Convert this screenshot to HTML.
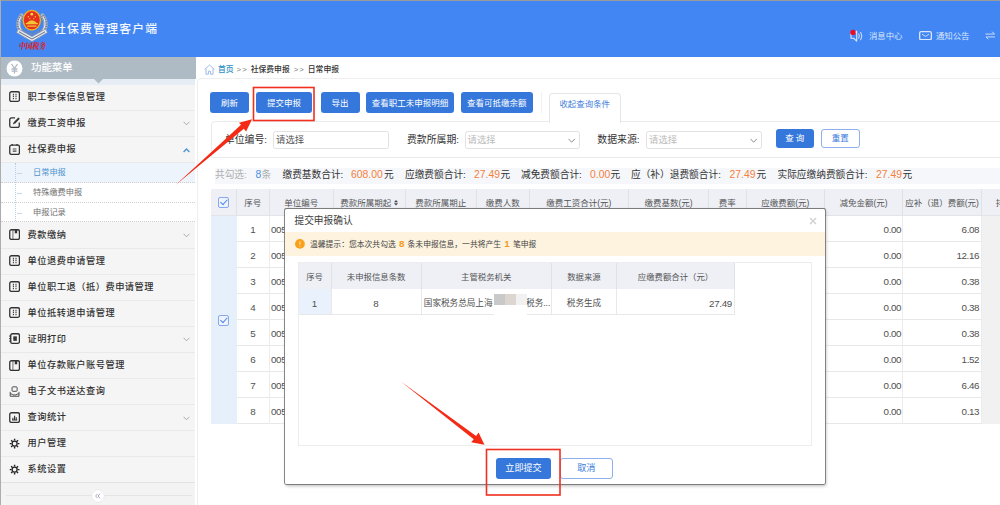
<!DOCTYPE html>
<html lang="zh-CN">
<head>
<meta charset="utf-8">
<title>社保费管理客户端</title>
<style>
*{box-sizing:border-box;margin:0;padding:0}
html,body{width:1000px;height:505px;overflow:hidden;background:#fff}
body{position:relative;font-family:"Liberation Sans","Noto Sans CJK SC",sans-serif;color:#333;font-size:9px;line-height:1}
.abs{position:absolute}
#topline{left:0;top:0;width:1000px;height:1px;background:#9a9a9a}
#header{left:0;top:1px;width:1000px;height:56px;background:#4286f4}
#leftline{left:0;top:0;width:1.200px;height:505px;background:#adadad;z-index:5}
#title{font-weight:500;left:54px;top:20px;font-size:11.8px;letter-spacing:1.25px;color:#f4f8ff;line-height:16px;white-space:nowrap}
.hdtxt{color:#d9e6fd;font-size:8.400px;line-height:12px;top:29.200px;white-space:nowrap}
/* sidebar */
#side{left:0;top:57px;width:195px;height:448px;background:#f5f5f5}
#sidehd{z-index:2;left:0;top:0;width:195.700px;height:22px;background:#aebbc5}
#sidehd .t{left:31px;top:4px;font-size:10.4px;line-height:14px;color:#fff;white-space:nowrap;text-shadow:0 0 1px rgba(255,255,255,.6)}
#strip{left:0;top:22px;width:195px;height:5.5px;background:#e6edf5}
.mi{left:0;width:195px;height:26.100px;border-bottom:1px solid #e9e9e9;font-size:9.2px;letter-spacing:.550px;color:#303030;line-height:25.600px;padding-left:27.500px;white-space:nowrap;font-weight:500}
.mi svg.ic{position:absolute;left:8.600px;top:6.600px;width:11.200px;height:11.200px}
.mi svg.ch{position:absolute;left:182.5px;top:10.5px;width:7px;height:5px}
.sub{left:1px;width:194px;height:19.8px;background:#fff;border-bottom:1px dotted #cfcfcf;font-size:8.200px;color:#707070;line-height:20.500px;padding-left:32px;white-space:nowrap}
.sub.on{background:#eef4fb;color:#4b93cf}
.sub i{position:absolute;left:16px;top:10px;width:4.5px;height:1px;background:#c9d6e6}

/* main */
#crumb{left:204px;top:64.300px;height:12px;line-height:12px;font-size:7.800px;color:#333;white-space:nowrap;font-weight:500}
#crumbline{left:197px;top:77.500px;width:810px;height:440px;border:1px solid #eee;border-radius:4px 0 0 0}
.btn{top:92.400px;height:21px;border-radius:3px;background:#3577da;color:#fff;font-size:8.500px;line-height:22.500px;text-align:center;white-space:nowrap}
#tab{left:549px;top:92.500px;width:71.500px;height:30px;border:1px solid #e6e6e6;border-bottom:none;border-radius:4px 4px 0 0;background:#fff;color:#3f7fdc;font-size:8.450px;line-height:21px;text-align:center;z-index:2}
#qpanel{left:210.500px;top:121px;width:800px;height:37px;border:1px solid #ebebeb;border-radius:4px 0 0 0}
.lbl{top:133.200px;font-size:9.900px;line-height:13px;color:#333;white-space:nowrap;text-align:right}
.inp{top:131.200px;height:17.400px;border:1px solid #e2e2e2;border-radius:2.500px;background:#fff;font-size:9.400px;line-height:16.400px;color:#bbb;padding-left:2px;white-space:nowrap}
.inp svg{position:absolute;right:3.200px;top:5.800px;width:7.400px;height:5.300px}
#sum{left:210.500px;top:167.500px;width:790px;height:16px;background:linear-gradient(90deg,#fff 4px,#f5f7fa 4px);font-size:9.700px;line-height:14.500px;color:#333;white-space:nowrap}
#sum span{position:absolute;top:0}
#sum .o{color:#f5803a;font-size:10.400px}
#sum .g{color:#b0b0b0}
/* table */
#thead{left:210.500px;top:189px;width:790px;height:26.500px;background:#eef0f5;border-bottom:1px solid #e2e4ea}
.th{top:0;height:26px;line-height:29px;font-size:8.500px;color:#555;text-align:center;border-right:1px solid #dfe1e6;white-space:nowrap;overflow:hidden}
#chkcol{left:210.500px;top:215.500px;width:26.500px;height:208px;background:#e6f0fb}
.tr{left:237px;width:763px;height:26.100px;border-bottom:1px solid #e8e8e8;font-size:9.800px;letter-spacing:-.350px;line-height:28px;color:#505050}
.td{top:0;height:26px;border-right:1px solid #ececec;white-space:nowrap;overflow:hidden}
.cb{width:11.200px;height:11.200px;border:1px solid #86a9ee;border-radius:2px;background:#eef3fd}
.cb:after{content:"";position:absolute;left:2.800px;top:.600px;width:3.300px;height:5.600px;border:solid #4f86ea;border-width:0 1.300px 1.300px 0;transform:rotate(42deg)}

/* dialog */
#dlg{left:284.800px;top:208.800px;width:540.200px;height:275.700px;background:#fff;border-radius:1.500px;box-shadow:0 0 0 .900px rgba(120,120,120,.9),0 -.300px .500px .600px rgba(90,90,90,.5),1px 1.500px 3.500px rgba(0,0,0,.28);z-index:10}
#dlg .ttl{left:10.500px;top:6.300px;font-size:9.700px;line-height:14px;color:#3c3c3c;white-space:nowrap}
#dlg .x{left:524px;top:5px;font-size:13px;line-height:14px;color:#cfcfcf;font-weight:400}
#warn{left:.800px;top:24px;width:540.200px;height:24px;background:#fdf3df;font-size:7.800px;line-height:23.500px;color:#444;white-space:nowrap;padding-left:25.200px}
#warn b{color:#f59a23;font-size:9.800px;font-weight:700;margin:0 1px}
#grid{left:13.500px;top:54.100px;width:514.500px;height:183.500px;border:1px solid #ededed}
.gh{top:0;height:26px;background:#eef0f5;border-right:1px solid #e0e2e8;font-size:8.400px;line-height:28px;color:#555;text-align:center;white-space:nowrap}
.gd{top:26px;height:25.800px;border-right:1px solid #e8e8e8;border-bottom:1px solid #e8e8e8;font-size:8.600px;line-height:29px;color:#505050;text-align:center;white-space:nowrap;overflow:hidden}
.dbtn{top:250px;height:20.500px;border-radius:3px;font-size:9.100px;line-height:20px;text-align:center;white-space:nowrap}
</style>
</head>
<body>
<div class="abs" id="topline"></div>
<div class="abs" id="header">
  <svg class="abs" style="left:15px;top:6px" width="34" height="36" viewBox="0 0 34 36">
    <g fill="none" stroke-linecap="round">
      <path d="M6.500 8.500C1.500 15 2.500 24 10 28.500" stroke="#aeb7c4" stroke-width="4.200"/><path d="M27.500 8.500C32.500 15 31.500 24 24 28.500" stroke="#aeb7c4" stroke-width="4.200"/>
      <path d="M6.500 8.500C1.500 15 2.500 24 10 28.500" stroke="#6d7a92" stroke-width="3.600" stroke-dasharray=".9 1.300" stroke-linecap="butt"/><path d="M27.500 8.500C32.500 15 31.500 24 24 28.500" stroke="#6d7a92" stroke-width="3.600" stroke-dasharray=".9 1.300" stroke-linecap="butt"/>
      <path d="M5.800 10C2.500 15.500 3.500 22.500 9.500 26.500" stroke="#eef1f5" stroke-width="1"/><path d="M28.200 10C31.500 15.500 30.500 22.500 24.500 26.500" stroke="#eef1f5" stroke-width="1"/>
    </g>
    <path d="M1.500 25.500L17 34.500L32.500 25.500L30.500 22L17 29.500L3.500 22Z" fill="#e4e8ee" stroke="#7f8ba0" stroke-width=".7"/>
    <path d="M4 24.800L17 32L30 24.800" fill="none" stroke="#55637c" stroke-width=".9"/>
    <path d="M7 22.500L17 27.500L27 22.500" fill="none" stroke="#7d899d" stroke-width="1.600" stroke-dasharray="1.200 .8"/>
    <ellipse cx="16.800" cy="13.200" rx="9.300" ry="10.500" fill="#efb125"/>
    <ellipse cx="16.800" cy="13.200" rx="7.900" ry="9.100" fill="#e5301d"/>
    <path d="M10.700 16h12.200v1.300h-12.200zM12.200 18.500h9.200v1.200h-9.200z" fill="#f3c536"/>
    <path d="M11.700 16q5.100-5.600 10.200 0z" fill="#f3c536"/>
    <circle cx="16.800" cy="7.200" r="1.400" fill="#f7d548"/><circle cx="13.300" cy="9.700" r=".7" fill="#f7d548"/><circle cx="20.300" cy="9.700" r=".7" fill="#f7d548"/><circle cx="14.800" cy="11.600" r=".6" fill="#f7d548"/><circle cx="18.800" cy="11.600" r=".6" fill="#f7d548"/>
  </svg>
  <div class="abs" style="left:19px;top:39.500px;font-family:'Liberation Serif','Noto Serif CJK SC',serif;font-weight:900;font-size:6.800px;line-height:10px;color:#d8232a;letter-spacing:-.100px;white-space:nowrap;transform:skewX(-10deg) scaleY(1.250)">中国税务</div>
  <div class="abs" id="title">社保费管理客户端</div>
  <svg class="abs" style="left:849px;top:28px" width="16" height="14" viewBox="0 0 16 14">
    <path d="M2 5h2.400l3.300-2.900v10l-3.300-2.900H2z" fill="none" stroke="#dbe7fd" stroke-width="1.100" stroke-linejoin="round"/>
    <path d="M9.600 4.600q1.500 2.500 0 5M11.600 3q2.500 4.100 0 8.200" fill="none" stroke="#dbe7fd" stroke-width="1"/>
    <circle cx="4" cy="3.400" r="2.600" fill="#f5081a"/>
  </svg>
  <div class="abs hdtxt" style="left:869px">消息中心</div>
  <svg class="abs" style="left:919px;top:29.700px" width="13" height="9.400" viewBox="0 0 13 9.400">
    <rect x=".65" y=".65" width="11.700" height="8.100" rx="1.400" fill="none" stroke="#dbe7fd" stroke-width="1.300"/>
    <path d="M3 3.200l3.500 2.200l3.500-2.200" fill="none" stroke="#dbe7fd" stroke-width=".9"/>
  </svg>
  <div class="abs hdtxt" style="left:936px">通知公告</div>
  <svg class="abs" style="left:985px;top:30.300px" width="10.500" height="9" viewBox="0 0 11 9">
    <path d="M.5 3 h9.500 l-2.500 -2.500 M10.500 6 h-9.500 l2.500 2.500" fill="none" stroke="#d3e1fc" stroke-width="1"/>
  </svg>
</div>
<div class="abs" id="leftline"></div>
<div class="abs" id="side">
  <div class="abs" id="sidehd">
    <svg class="abs" style="left:5.500px;top:2.500px" width="17" height="17" viewBox="0 0 17 17"><circle cx="8.500" cy="8.500" r="8" fill="#fff"/><path d="M5.500 4 L8.500 8.300 L11.500 4 M8.500 8.300 V13.500 M5.500 9 h6 M5.500 11.200 h6" fill="none" stroke="#aebbc5" stroke-width="1.300"/></svg>
    <div class="abs t">功能菜单</div>
    <svg class="abs" style="left:93.500px;top:21.500px" width="9" height="5" viewBox="0 0 9 5"><path d="M0 0 h9 L4.500 4.500z" fill="#aebbc5"/></svg>
  </div>
  <div class="abs" id="strip"></div>
  <div class="abs mi" style="top:27.800px"><svg class="ic" viewBox="0 0 12 12"><rect x=".8" y=".8" width="10.400" height="10.400" rx="1.800" fill="none" stroke="#333" stroke-width="1.400"/><path d="M4.700 3v6M7.500 3v6" stroke="#333" stroke-width="1.100" stroke-dasharray="1.500 .700" fill="none"/></svg>职工参保信息管理</div>
  <div class="abs mi" style="top:53.900px"><svg class="ic" viewBox="0 0 12 12"><path d="M6.500 1H2.600a1.800 1.800 0 0 0-1.800 1.800v6.600a1.800 1.800 0 0 0 1.800 1.800h6.600a1.800 1.800 0 0 0 1.800-1.800V5.800" fill="none" stroke="#333" stroke-width="1.400"/><path d="M5.600 6.600L10.800 1.200" stroke="#333" stroke-width="2.200" fill="none"/><path d="M4.300 7.900l.5-2 1.600 1.500z" fill="#333"/></svg>缴费工资申报<svg class="ch" viewBox="0 0 7 5"><path d="M.6 .8L3.500 3.800L6.400 .8" fill="none" stroke="#aaa" stroke-width="1"/></svg></div>
  <div class="abs mi" style="top:80px"><svg class="ic" viewBox="0 0 12 12"><rect x=".8" y="1.300" width="10.400" height="9.900" rx="1.800" fill="none" stroke="#333" stroke-width="1.400"/><path d="M3.400 0v1.600M8.600 0v1.600" stroke="#333" stroke-width="1.400"/><path d="M4 5.200h4M4 6.600h4M4 8h4" stroke="#555" stroke-width=".9"/></svg>社保费申报<svg class="ch" viewBox="0 0 7 5"><path d="M.6 4L3.500 1L6.400 4" fill="none" stroke="#4b93cf" stroke-width="1.300"/></svg></div>
  <div class="abs sub on" style="top:106.300px"><i></i>日常申报</div>
  <div class="abs sub" style="top:126px"><i></i>特殊缴费申报</div>
  <div class="abs sub" style="top:145.700px"><i></i>申报记录</div>
  <div class="abs" style="left:14.500px;top:106px;width:0;height:58px;border-left:1px dotted #b9cfe8"></div>
  <div class="abs mi" style="top:165.500px"><svg class="ic" viewBox="0 0 12 12"><rect x=".8" y=".8" width="10.400" height="10.400" rx="1.800" fill="none" stroke="#333" stroke-width="1.400"/><path d="M4.200 1v10" stroke="#444" stroke-width=".8"/><rect x="6.200" y="1" width="2.600" height="3.600" fill="#333"/></svg>费款缴纳<svg class="ch" viewBox="0 0 7 5"><path d="M.6 .8L3.500 3.800L6.400 .8" fill="none" stroke="#aaa" stroke-width="1"/></svg></div>
  <div class="abs mi" style="top:191.600px"><svg class="ic" viewBox="0 0 12 12"><rect x=".8" y=".8" width="10.400" height="10.400" rx="1.800" fill="none" stroke="#333" stroke-width="1.400"/><path d="M4.700 3v6M7.500 3v6" stroke="#333" stroke-width="1.100" stroke-dasharray="1.500 .700" fill="none"/></svg>单位退费申请管理</div>
  <div class="abs mi" style="top:217.700px"><svg class="ic" viewBox="0 0 12 12"><rect x=".8" y=".8" width="10.400" height="10.400" rx="1.800" fill="none" stroke="#333" stroke-width="1.400"/><path d="M4.700 3v6M7.500 3v6" stroke="#333" stroke-width="1.100" stroke-dasharray="1.500 .700" fill="none"/></svg>单位职工退（抵）费申请管理</div>
  <div class="abs mi" style="top:243.800px"><svg class="ic" viewBox="0 0 12 12"><rect x=".8" y=".8" width="10.400" height="10.400" rx="1.800" fill="none" stroke="#333" stroke-width="1.400"/><path d="M4.700 3v6M7.500 3v6" stroke="#333" stroke-width="1.100" stroke-dasharray="1.500 .700" fill="none"/></svg>单位抵转退申请管理</div>
  <div class="abs mi" style="top:269.900px"><svg class="ic" viewBox="0 0 12 12"><rect x="1.800" y=".8" width="9.400" height="10.400" rx="1.800" fill="none" stroke="#333" stroke-width="1.400"/><path d="M0 3.300h2.400M0 6h2.400M0 8.700h2.400" stroke="#333" stroke-width="1"/><rect x="4.600" y="3.600" width="3.800" height="4.800" fill="#333"/></svg>证明打印<svg class="ch" viewBox="0 0 7 5"><path d="M.6 .8L3.500 3.800L6.400 .8" fill="none" stroke="#aaa" stroke-width="1"/></svg></div>
  <div class="abs mi" style="top:296.000px"><svg class="ic" viewBox="0 0 12 12"><rect x=".8" y=".8" width="10.400" height="10.400" rx="1.800" fill="none" stroke="#333" stroke-width="1.400"/><path d="M4.200 1v10" stroke="#444" stroke-width=".8"/><rect x="6.200" y="1" width="2.600" height="3.600" fill="#333"/></svg>单位存款账户账号管理</div>
  <div class="abs mi" style="top:322.100px"><svg class="ic" viewBox="0 0 12 12"><rect x="3.300" y=".9" width="5.400" height="4.800" rx=".8" fill="none" stroke="#444" stroke-width="1"/><path d="M1.300 6.300V11h9.400V6.300M1.300 8.600h2.200l.8 1h3.400l.8-1h2.200" fill="none" stroke="#444" stroke-width="1"/></svg>电子文书送达查询</div>
  <div class="abs mi" style="top:348.200px"><svg class="ic" viewBox="0 0 12 12"><rect x=".8" y=".8" width="10.400" height="10.400" rx="1.800" fill="none" stroke="#333" stroke-width="1.400"/><path d="M3.300 8.600h5.600" stroke="#333" stroke-width="1"/><path d="M4.200 8.500V6.300M6 8.500V4M7.800 8.500V5.600" stroke="#333" stroke-width="1.200"/></svg>查询统计<svg class="ch" viewBox="0 0 7 5"><path d="M.6 .8L3.500 3.800L6.400 .8" fill="none" stroke="#aaa" stroke-width="1"/></svg></div>
  <div class="abs mi" style="top:374.300px"><svg class="ic" viewBox="-.700 -.700 13.400 13.400"><circle cx="6" cy="6" r="3" fill="none" stroke="#222" stroke-width="1.500"/><g stroke="#222" stroke-width="1.700"><path d="M6 .2v2.200M6 9.600v2.200M.2 6h2.200M9.600 6h2.200M1.900 1.900l1.500 1.500M8.600 8.600l1.500 1.500M10.100 1.900L8.600 3.400M3.400 8.600L1.900 10.100"/></g></svg>用户管理</div>
  <div class="abs mi" style="top:400.400px"><svg class="ic" viewBox="-.700 -.700 13.400 13.400"><circle cx="6" cy="6" r="3" fill="none" stroke="#222" stroke-width="1.500"/><g stroke="#222" stroke-width="1.700"><path d="M6 .2v2.200M6 9.600v2.200M.2 6h2.200M9.600 6h2.200M1.900 1.900l1.500 1.500M8.600 8.600l1.500 1.500M10.100 1.900L8.600 3.400M3.400 8.600L1.900 10.100"/></g></svg>系统设置</div>
  <div class="abs" style="left:0;top:425px;width:195px;height:23px;background:#f3f3f3;border-top:1px solid #e2e2e2"></div>
  <div class="abs" style="left:6px;top:437.500px;width:186px;height:1px;background:#e4e4e4"></div>
  <svg class="abs" style="left:91px;top:431.500px" width="14" height="14" viewBox="0 0 14 14"><circle cx="7" cy="7" r="6.300" fill="#fff" stroke="#e6e6ee" stroke-width=".8"/><path d="M6.600 4.800L4.600 7L6.600 9.200M9 4.800L7 7L9 9.200" fill="none" stroke="#a9a9c8" stroke-width="1"/></svg>
</div>
<div class="abs" id="crumb"><svg style="position:absolute;left:-.500px;top:-.300px" width="11" height="11" viewBox="0 0 10 10"><path d="M.6 5L5 .9L9.400 5M1.800 4.200V9.300h2.200V6.600h2V9.300h2.200V4.200" fill="none" stroke="#9db9e8" stroke-width=".9"/></svg><span style="margin-left:14px;color:#2f8fc4">首页</span><span style="color:#777;letter-spacing:1px;margin:0 3px 0 3px">&gt;&gt;</span>社保费申报<span style="color:#777;letter-spacing:1px;margin:0 3px 0 4px">&gt;&gt;</span>日常申报</div>
<div class="abs" id="crumbline"></div>
<div class="abs btn" style="left:210px;width:39px">刷新</div>
<div class="abs btn" style="left:256px;width:56px">提交申报</div>
<div class="abs btn" style="left:320.5px;width:39px">导出</div>
<div class="abs btn" style="left:366px;width:88px">查看职工未申报明细</div>
<div class="abs btn" style="left:461px;width:71.5px">查看可抵缴余额</div>
<div class="abs" style="left:540.500px;top:92px;width:1px;height:21px;background:#f0f0f0"></div>
<div class="abs" id="tab">收起查询条件</div>
<div class="abs" id="qpanel"></div>
<div class="abs lbl" style="left:217px;width:50px">单位编号:</div>
<div class="abs inp" style="left:273px;width:115.500px;color:#555">请选择</div>
<div class="abs lbl" style="left:399px;width:60px">费款所属期:</div>
<div class="abs inp" style="left:464.500px;width:115.500px">请选择<svg viewBox="0 0 7 5"><path d="M.5 .8L3.500 4L6.500 .8" fill="none" stroke="#8a8a8a" stroke-width=".9"/></svg></div>
<div class="abs lbl" style="left:589px;width:50.500px">数据来源:</div>
<div class="abs inp" style="left:646px;width:115.500px">请选择<svg viewBox="0 0 7 5"><path d="M.5 .8L3.500 4L6.500 .8" fill="none" stroke="#8a8a8a" stroke-width=".9"/></svg></div>
<div class="abs" style="left:775.500px;top:129px;width:38.500px;height:19px;border-radius:3px;background:#3577da;color:#fff;font-size:8.500px;line-height:19px;text-align:center;letter-spacing:2px;padding-left:2px">查询</div>
<div class="abs" style="left:821px;top:129px;width:38.500px;height:19px;border-radius:3px;border:1px solid #8db0ec;background:#fff;color:#3a7cdc;font-size:8.500px;line-height:17px;text-align:center">重置</div>
<div class="abs" id="sum"><span class="g" style="left:4.500px">共勾选:</span><span style="left:45px;color:#4a8ee0;font-size:10.400px">8</span><span class="g" style="left:51px">条</span><span style="left:72px">缴费基数合计:</span><span class="o" style="left:140.500px">608.00</span><span style="left:173.500px">元</span><span style="left:194.500px">应缴费额合计:</span><span class="o" style="left:263.500px">27.49</span><span style="left:290px">元</span><span style="left:310.500px">减免费额合计:</span><span class="o" style="left:379.500px">0.00</span><span style="left:400px">元</span><span style="left:420.500px">应（补）退费额合计:</span><span class="o" style="left:519px">27.49</span><span style="left:546px">元</span><span style="left:567px">实际应缴纳费额合计:</span><span class="o" style="left:665.500px">27.49</span><span style="left:692px">元</span></div>
<div class="abs" id="thead">
<div class="abs th" style="left:0.0px;width:26.5px"><div class="cb" style="position:absolute;left:7.500px;top:7.500px"></div></div>
<div class="abs th" style="left:26.5px;width:32.5px">序号</div>
<div class="abs th" style="left:59.0px;width:64.5px">单位编号</div>
<div class="abs th" style="left:123.5px;width:71.5px">费款所属期起<svg style="display:inline-block;vertical-align:middle;margin:-1.500px 0 0 3px" width="4" height="5.600" viewBox="0 0 46 64"><path d="M23 0L46 26H0zM23 64L0 38H46z" fill="#444"/></svg></div>
<div class="abs th" style="left:195.0px;width:71.5px">费款所属期止</div>
<div class="abs th" style="left:266.5px;width:52.5px">缴费人数</div>
<div class="abs th" style="left:319.0px;width:99.5px">缴费工资合计(元)</div>
<div class="abs th" style="left:418.5px;width:80px">缴费基数(元)</div>
<div class="abs th" style="left:498.5px;width:37.5px">费率</div>
<div class="abs th" style="left:536.0px;width:78.5px">应缴费额(元)</div>
<div class="abs th" style="left:614.5px;width:78px">减免金额(元)</div>
<div class="abs th" style="left:692.5px;width:79px">应补（退）费额(元)</div>
<div class="abs th" style="left:771.5px;width:28px"><span style="margin-left:9px">排</span></div>
</div>
<div class="abs" id="chkcol"><div class="cb" style="position:absolute;left:7.500px;top:99px"></div></div>
<div class="abs tr" style="top:215.50px"><div class="abs td" style="left:0;width:32.500px;text-align:center">1</div><div class="abs td" style="left:32.500px;width:64.500px;padding-left:1.500px">005</div><div class="abs td" style="left:588px;width:78px;text-align:right;padding-right:.800px">0.00</div><div class="abs td" style="left:666px;width:79px;text-align:right;padding-right:1.800px">6.08</div><div class="abs td" style="left:745px;width:30px;background:#f1f1f1;border:none"></div></div>
<div class="abs tr" style="top:241.57px"><div class="abs td" style="left:0;width:32.500px;text-align:center">2</div><div class="abs td" style="left:32.500px;width:64.500px;padding-left:1.500px">005</div><div class="abs td" style="left:588px;width:78px;text-align:right;padding-right:.800px">0.00</div><div class="abs td" style="left:666px;width:79px;text-align:right;padding-right:1.800px">12.16</div><div class="abs td" style="left:745px;width:30px;background:#f1f1f1;border:none"></div></div>
<div class="abs tr" style="top:267.64px"><div class="abs td" style="left:0;width:32.500px;text-align:center">3</div><div class="abs td" style="left:32.500px;width:64.500px;padding-left:1.500px">005</div><div class="abs td" style="left:588px;width:78px;text-align:right;padding-right:.800px">0.00</div><div class="abs td" style="left:666px;width:79px;text-align:right;padding-right:1.800px">0.38</div><div class="abs td" style="left:745px;width:30px;background:#f1f1f1;border:none"></div></div>
<div class="abs tr" style="top:293.71px"><div class="abs td" style="left:0;width:32.500px;text-align:center">4</div><div class="abs td" style="left:32.500px;width:64.500px;padding-left:1.500px">005</div><div class="abs td" style="left:588px;width:78px;text-align:right;padding-right:.800px">0.00</div><div class="abs td" style="left:666px;width:79px;text-align:right;padding-right:1.800px">0.38</div><div class="abs td" style="left:745px;width:30px;background:#f1f1f1;border:none"></div></div>
<div class="abs tr" style="top:319.78px"><div class="abs td" style="left:0;width:32.500px;text-align:center">5</div><div class="abs td" style="left:32.500px;width:64.500px;padding-left:1.500px">005</div><div class="abs td" style="left:588px;width:78px;text-align:right;padding-right:.800px">0.00</div><div class="abs td" style="left:666px;width:79px;text-align:right;padding-right:1.800px">0.38</div><div class="abs td" style="left:745px;width:30px;background:#f1f1f1;border:none"></div></div>
<div class="abs tr" style="top:345.85px"><div class="abs td" style="left:0;width:32.500px;text-align:center">6</div><div class="abs td" style="left:32.500px;width:64.500px;padding-left:1.500px">005</div><div class="abs td" style="left:588px;width:78px;text-align:right;padding-right:.800px">0.00</div><div class="abs td" style="left:666px;width:79px;text-align:right;padding-right:1.800px">1.52</div><div class="abs td" style="left:745px;width:30px;background:#f1f1f1;border:none"></div></div>
<div class="abs tr" style="top:371.92px"><div class="abs td" style="left:0;width:32.500px;text-align:center">7</div><div class="abs td" style="left:32.500px;width:64.500px;padding-left:1.500px">005</div><div class="abs td" style="left:588px;width:78px;text-align:right;padding-right:.800px">0.00</div><div class="abs td" style="left:666px;width:79px;text-align:right;padding-right:1.800px">6.46</div><div class="abs td" style="left:745px;width:30px;background:#f1f1f1;border:none"></div></div>
<div class="abs tr" style="top:397.99px"><div class="abs td" style="left:0;width:32.500px;text-align:center">8</div><div class="abs td" style="left:32.500px;width:64.500px;padding-left:1.500px">005</div><div class="abs td" style="left:588px;width:78px;text-align:right;padding-right:.800px">0.00</div><div class="abs td" style="left:666px;width:79px;text-align:right;padding-right:1.800px">0.13</div><div class="abs td" style="left:745px;width:30px;background:#f1f1f1;border:none"></div></div>
<div class="abs" id="dlg"><div class="abs" style="left:-.800px;top:-.800px;width:541px;height:276.500px">
<div class="abs ttl">提交申报确认</div>
<svg class="abs" style="left:525px;top:8.500px" width="8" height="8" viewBox="0 0 8 8"><path d="M1 1L7 7M7 1L1 7" stroke="#d2d2d2" stroke-width="1.500" fill="none"/></svg>
<div class="abs" id="warn"><svg style="position:absolute;left:10.500px;top:7.200px" width="9.800" height="9.800" viewBox="0 0 9 9"><circle cx="4.500" cy="4.500" r="4.500" fill="#f9a11b"/><path d="M4.500 2.200V5.200M4.500 6.200V7" stroke="#fde7bf" stroke-width=".9"/></svg>温馨提示：您本次共勾选 <b>8</b> 条未申报信息，一共将产生 <b>1</b> 笔申报</div>
<div class="abs" id="grid">
<div class="abs gh" style="left:0px;width:33px">序号</div>
<div class="abs gh" style="left:33px;width:90.200px">未申报信息条数</div>
<div class="abs gh" style="left:123.200px;width:130px">主管税务机关</div>
<div class="abs gh" style="left:253.200px;width:65.600px">数据来源</div>
<div class="abs gh" style="left:318.800px;width:117.400px">应缴费额合计（元）</div>
<div class="abs gd" style="left:0;width:33px;background:#e8f1fc;font-size:9.800px">1</div>
<div class="abs gd" style="left:33px;width:90.200px;font-size:9.800px">8</div>
<div class="abs gd" style="left:123.200px;width:130px;text-align:left;padding-left:2.100px">国家税务总局上海<span style="display:inline-block;width:33.500px"></span>税务...</div>
<div class="abs gd" style="left:253.200px;width:65.600px">税务生成</div>
<div class="abs gd" style="left:318.800px;width:117.400px;text-align:right;padding-right:1.800px;font-size:9.800px;letter-spacing:-.350px">27.49</div>
<div class="abs" style="left:195px;top:30.500px;width:33.500px;height:22.500px;background:#fff"></div>
<div class="abs" style="left:195.500px;top:30.700px;width:11px;height:10.800px;background:#c9c9c9"></div>
<div class="abs" style="left:206.500px;top:30.700px;width:11px;height:10.800px;background:#ddd5d0"></div>
<div class="abs" style="left:217.500px;top:30.700px;width:11px;height:10.800px;background:#f1f1f1"></div>
</div>
<div class="abs dbtn" style="left:212px;width:55px;background:#3577da;color:#fff">立即提交</div>
<div class="abs dbtn" style="left:276px;width:52.500px;border:1px solid #8db0ec;color:#3a7cdc;line-height:18.500px">取消</div>
</div></div>
<svg class="abs" style="left:0;top:0;z-index:20;pointer-events:none" width="1000" height="505" viewBox="0 0 1000 505">
<rect x="253.500" y="87.500" width="60.500" height="33" fill="none" stroke="#f1301f" stroke-width="1.600"/>
<rect x="486.500" y="449.500" width="73.500" height="45.500" fill="none" stroke="#f1301f" stroke-width="1.600"/>
<path d="M175.300 185.200L241 124.800L239 122.800L252.100 119.300L246.100 131.500L243.800 128.800Z" fill="#f42a14"/>
<path d="M400.500 381.300L476.100 435.900L478.600 432.600L484.400 444.700L471.200 442.200L473.700 439.200Z" fill="#f42a14"/>
</svg>
</body>
</html>
